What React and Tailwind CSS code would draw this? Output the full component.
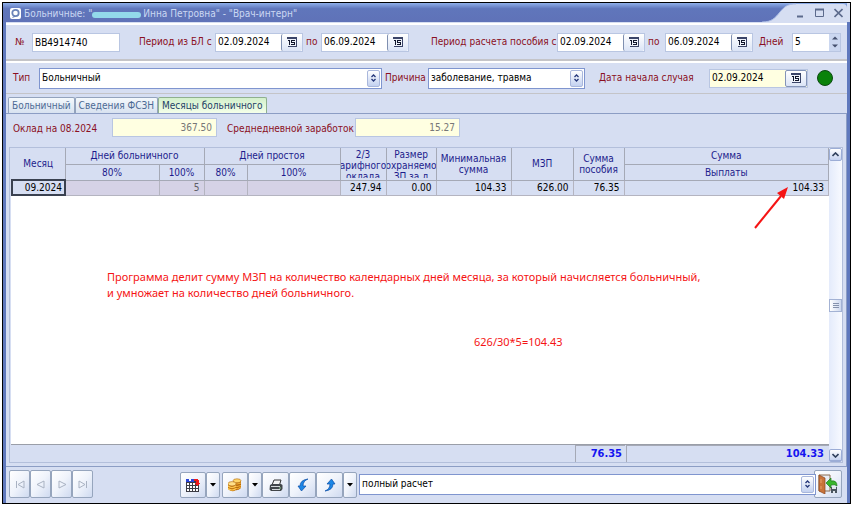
import { useState } from 'react'
import clsx from 'clsx'

const FIELD = 'min-w-0 h-[19px] border border-[#b9c6e2]'

const COLS = ['w-[53px]', 'w-[94px]', 'w-[45px]', 'w-[43px]', 'w-[93px]', 'w-[46px]', 'w-[50px]', 'w-[75px]', 'w-[62px]', 'w-[51px]', '']

const TABS = ['Больничный', 'Сведения ФСЗН', 'Месяцы больничного']

const NAV = [
  { label: 'Первая запись', d: 'M1.5 1v7M9 1v7L3 4.500z' },
  { label: 'Предыдущая запись', d: 'M8 1v7L1 4.500z' },
  { label: 'Следующая запись', d: 'M2 1v7L9 4.500z' },
  { label: 'Последняя запись', d: 'M8.500 1v7M1 1v7L7 4.500z' },
]

function CalendarIcon() {
  return (
    <svg width="10" height="10" viewBox="0 0 10 10" shapeRendering="crispEdges" aria-hidden="true">
      <rect x="1" y="0" width="9" height="10" fill="#3a4468" />
      <rect x="0" y="2" width="9" height="7" fill="#eef2fa" />
      <rect x="0" y="0" width="9" height="2" fill="#3a4468" />
      <path d="M2 3h1v5h-1zM1 3h1v1h-1zM4 3h4v1h-4zM4 4h1v1h-1zM4 5h4v1h-4zM7 6h1v1h-1zM4 7h4v1h-4z" fill="#10162c" />
    </svg>
  )
}

function DateField({ id, value, yellow }) {
  return (
    <div className={clsx('flex h-[19px] items-stretch border border-[#b9c6e2]', yellow ? 'w-[99px] bg-[#ffffe1]' : 'w-[88px] bg-white')}>
      <input id={id} defaultValue={value} className="min-w-0 flex-1 bg-transparent pl-0.5 text-black outline-none" />
      <button
        type="button"
        aria-label="Открыть календарь"
        className={clsx(
          'flex items-center justify-center rounded-xs bg-linear-to-b from-white to-[#dbe4f6]',
          yellow ? 'w-[22px] border border-[#8494b8]' : 'w-[21px] border-l border-[#7f8fb0]'
        )}
      >
        <CalendarIcon />
      </button>
    </div>
  )
}

function Combo({ id, label, value, className }) {
  return (
    <div className={clsx('relative h-[21px] min-w-0', className)}>
      <select
        id={id}
        aria-label={label}
        defaultValue={value}
        className="block h-full w-full appearance-none rounded-none border border-[#7f95cf] bg-white pl-0.5 text-black outline-none"
      >
        <option>{value}</option>
      </select>
      <span className="pointer-events-none absolute inset-y-0.5 right-0.5 flex w-[13px] items-center justify-center rounded-xs border border-[#a9b7dc] bg-linear-to-b from-white to-[#c3d1f0]">
        <svg width="5" height="8" viewBox="0 0 5 8" aria-hidden="true">
          <path d="M.5 3L2.500 1l2 2M.5 5l2 2 2-2" fill="none" stroke="#25377a" strokeWidth="1.3" />
        </svg>
      </span>
    </div>
  )
}

function ToolButton({ label, className, children }) {
  return (
    <button
      type="button"
      aria-label={label}
      className={clsx('flex items-center justify-center rounded-xs border border-[#96a5bd] bg-linear-to-br from-white via-[#eff3fb] to-[#cfdaf0]', className)}
    >
      {children}
    </button>
  )
}

function DropButton({ label }) {
  return (
    <ToolButton label={label} className="h-[26px] w-[14px]">
      <svg width="6" height="4" viewBox="0 0 6 4" aria-hidden="true"><path d="M0 0h6L3 3.500z" fill="#000" /></svg>
    </ToolButton>
  )
}

function TitleBar() {
  return (
    <header className="flex h-[19px] bg-linear-to-b from-[#8fb0ea] via-[#6076bb] via-30% to-[#5f72b8] text-[#cbd8f3]">
      <div className="flex min-w-0 flex-1 items-center gap-[3px] pt-[2px] pl-[7px]">
        <svg width="11" height="11" viewBox="0 0 11 11" className="shrink-0" aria-hidden="true">
          <rect width="11" height="11" rx="2" fill="#fff" />
          <circle cx="5.500" cy="5" r="3.200" fill="none" stroke="#6a83b8" strokeWidth="1.8" />
          <path d="M3 8.500L2 10l3-1z" fill="#6a83b8" />
        </svg>
        <h1 className="flex items-center whitespace-nowrap">
          <span>Больничные: &quot;</span>
          <span className="mt-0.5 mr-[2px] h-[6px] w-[49px] rounded-full bg-[#93d9ea]" />
          <span>Инна Петровна&quot; - &quot;Врач-интерн&quot;</span>
        </h1>
      </div>
      <div className="flex">
        <svg width="34" height="19" viewBox="0 0 34 19" aria-hidden="true">
          <path d="M0 19C10 19 13 15 18 9C23 3 26 1 34 1V19z" fill="#d6def2" />
          <path d="M0 19C10 19 13 15 18 9C23 3 26 1 34 1" fill="none" stroke="#aebfe6" />
        </svg>
        <div className="mt-px flex items-center gap-[10px] rounded-tr bg-[#d6def2] pr-[4px] text-[#5c6a8c]">
          <button type="button" aria-label="Свернуть" className="block">
            <svg width="9" height="10" viewBox="0 0 9 10"><path d="M1 8.500h6" stroke="currentColor" strokeWidth="2" /></svg>
          </button>
          <button type="button" aria-label="Развернуть" className="block">
            <svg width="9" height="10" viewBox="0 0 9 10"><path d="M0 1.500h9" stroke="currentColor" strokeWidth="2" /><path d="M.5 1v7.500h8V1" fill="none" stroke="currentColor" /></svg>
          </button>
          <button type="button" aria-label="Закрыть" className="block">
            <svg width="9" height="10" viewBox="0 0 9 10"><path d="M.5 1l8 8M8.500 1l-8 8" stroke="currentColor" strokeWidth="1.6" /></svg>
          </button>
        </div>
        <div className="w-[3px] bg-[#d6def2]" />
      </div>
    </header>
  )
}

function Filters() {
  return (
    <div className="text-[#8b0f22]">
      <div className="flex h-[38px] items-center border-t-2 border-b-2 border-t-white border-b-[#c4c4c8] pl-[9px] whitespace-nowrap">
        <label htmlFor="num" className="w-[17px]">№</label>
        <input id="num" defaultValue="BB4914740" className={clsx(FIELD, 'w-[88px] bg-white pl-0.5 text-black')} />
        <label htmlFor="blFrom" className="ml-[19px] w-[76px]">Период из БЛ с</label>
        <DateField id="blFrom" value="02.09.2024" />
        <label htmlFor="blTo" className="w-[18px] pl-[3px]">по</label>
        <DateField id="blTo" value="06.09.2024" />
        <label htmlFor="calcFrom" className="ml-[22px] w-[126px]">Период расчета пособия с</label>
        <DateField id="calcFrom" value="02.09.2024" />
        <label htmlFor="calcTo" className="w-[20px] pl-[3px]">по</label>
        <DateField id="calcTo" value="06.09.2024" />
        <label htmlFor="days" className="ml-[6px] w-[33px]">Дней</label>
        <div className={clsx(FIELD, 'flex w-[49px] bg-white text-black')}>
          <input id="days" defaultValue="5" className="min-w-0 flex-1 pl-0.5 outline-none" />
          <div className="flex w-[11px] flex-col bg-[#cbd7f0]">
            <button type="button" aria-label="Больше" className="flex flex-1 items-center justify-center">
              <svg width="6" height="4" viewBox="0 0 6 4"><path d="M0 3.500h6L3 .5z" fill="#45506e" /></svg>
            </button>
            <button type="button" aria-label="Меньше" className="flex flex-1 items-center justify-center">
              <svg width="6" height="4" viewBox="0 0 6 4"><path d="M0 .5h6L3 3.500z" fill="#45506e" /></svg>
            </button>
          </div>
        </div>
      </div>
      <div className="flex h-[33px] items-center border-t-2 border-b border-t-white border-b-[#c4c4c8] pl-[7px] whitespace-nowrap">
        <label htmlFor="type" className="w-[26px]">Тип</label>
        <Combo id="type" value="Больничный" className="flex-1" />
        <label htmlFor="reason" className="w-[46px] pl-[3px]">Причина</label>
        <Combo id="reason" value="заболевание, травма" className="w-[157px]" />
        <label htmlFor="caseDate" className="ml-[14px] w-[110px]">Дата начала случая</label>
        <DateField id="caseDate" value="02.09.2024" yellow />
        <span className="mr-[14px] ml-[9px] size-[16px] rounded-full border border-[#0c4a12] bg-[#0a820a]" />
      </div>
    </div>
  )
}

function HeadCell({ children, ...rest }) {
  return (
    <th {...rest} className="border-r border-b border-[#a5a9b6] p-0 font-normal text-[#1c1c8c]">
      {children}
    </th>
  )
}

function MonthsTable() {
  return (
    <table className="w-full table-fixed border-collapse bg-[#d6def2] leading-[11px]">
      <colgroup>
        {COLS.map((c, i) => <col key={i} className={c} />)}
      </colgroup>
      <thead>
        <tr className="h-[16px]">
          <HeadCell rowSpan={2}>Месяц</HeadCell>
          <HeadCell colSpan={2}>Дней больничного</HeadCell>
          <HeadCell colSpan={2}>Дней простоя</HeadCell>
          <HeadCell rowSpan={2}>
            <div className="flex h-[29px] flex-col items-center overflow-hidden">
              <span>2/3</span><span>арифного</span><span>оклада</span>
            </div>
          </HeadCell>
          <HeadCell rowSpan={2}>
            <div className="flex h-[29px] flex-col items-center overflow-hidden">
              <span>Размер</span><span>охраняемо</span><span>ЗП за д</span>
            </div>
          </HeadCell>
          <HeadCell rowSpan={2}>Минимальная сумма</HeadCell>
          <HeadCell rowSpan={2}>МЗП</HeadCell>
          <HeadCell rowSpan={2}>Сумма пособия</HeadCell>
          <HeadCell>Сумма</HeadCell>
        </tr>
        <tr className="h-[16px]">
          <HeadCell>80%</HeadCell>
          <HeadCell>100%</HeadCell>
          <HeadCell>80%</HeadCell>
          <HeadCell>100%</HeadCell>
          <HeadCell>Выплаты</HeadCell>
        </tr>
      </thead>
      <tbody>
        <tr className="h-[15px] text-right text-black">
          <td className="border-2 border-[#3a4150] p-0 pr-0.5">09.2024</td>
          {['', '5', '', ''].map((v, i) => (
            <td key={i} className="border-r border-b border-[#b4b4c0] bg-[#d5d2e6] p-0 pr-1 text-[#5f5f68]">{v}</td>
          ))}
          {['247.94', '0.00', '104.33', '626.00', '76.35', '104.33'].map((v, i) => (
            <td key={i} className="border-r border-b border-[#b4b4c0] p-0 pr-1">{v}</td>
          ))}
        </tr>
      </tbody>
    </table>
  )
}

function ScrollBar() {
  return (
    <div className="flex w-[13px] flex-col items-center justify-between bg-linear-to-r from-[#e4ebfb] to-[#f8faff]">
      <button type="button" aria-label="Вверх" className="flex h-[13px] w-full items-center justify-center rounded-xs border border-[#9cadd6] bg-linear-to-b from-white to-[#c6d3f0]">
        <svg width="7" height="5" viewBox="0 0 7 5"><path d="M.5 4l3-3 3 3" fill="none" stroke="#30405c" strokeWidth="1.6" /></svg>
      </button>
      <span className="flex h-[13px] w-full items-center justify-center border border-[#a3b2d4] bg-linear-to-r from-white to-[#cdd8ef]">
        <svg width="6" height="5" viewBox="0 0 6 5"><path d="M0 .5h6M0 2.500h6M0 4.500h6" stroke="#8592ad" /></svg>
      </span>
      <button type="button" aria-label="Вниз" className="flex h-[13px] w-full items-center justify-center rounded-xs border border-b-2 border-[#9cadd6] bg-linear-to-b from-white to-[#c6d3f0]">
        <svg width="7" height="5" viewBox="0 0 7 5"><path d="M.5 1l3 3 3-3" fill="none" stroke="#30405c" strokeWidth="1.6" /></svg>
      </button>
    </div>
  )
}

function Toolbar() {
  return (
    <footer className="flex items-center pt-[3px] pr-[5px] pb-[5px] pl-[3px]">
      {NAV.map(({ label, d }) => (
        <ToolButton key={label} label={label} className="h-[28px] w-[21px]">
          <svg width="10" height="9" viewBox="0 0 10 9"><path d={d} fill="none" stroke="#a9b2c2" /></svg>
        </ToolButton>
      ))}
      <div className="mt-0.5 ml-[87px] flex items-center">
        <ToolButton label="Календарь" className="h-[26px] w-[26px]">
          <svg width="14" height="13" viewBox="0 0 14 13" shapeRendering="crispEdges" aria-hidden="true">
            <path d="M0 2h13v11H0z" fill="#3c3c44" />
            <path d="M1 4h2v2H1zM4 4h2v2H4zM7 4h2v2H7zM10 4h2v2h-2zM1 7h2v2H1zM4 7h2v2H4zM7 7h2v2H7zM10 7h2v2h-2zM1 10h2v2H1zM4 10h2v2H4zM7 10h2v2H7zM10 10h2v2h-2z" fill="#fff" />
            <path d="M0 0h8v3H0z" fill="#2b45d8" />
            <path d="M3 0h2v2H3z" fill="#fff" />
            <path d="M8 0h4v1h1v3h1v1h-1v1h-1v1h-1V6h-1V5H9V4h1V2H8z" fill="#f01818" />
          </svg>
        </ToolButton>
        <DropButton label="Меню календаря" />
        <ToolButton label="Выплаты" className="ml-[2px] h-[26px] w-[26px]">
          <svg width="14" height="14" viewBox="0 0 14 14" aria-hidden="true">
            <path d="M5 3v8q4 3 8-1V3z" fill="#b86a10" />
            <path d="M5 5q4 2 8 0M5 7.500q4 2 8 0M6 10q4 2 7-1" fill="none" stroke="#f4b437" />
            <ellipse cx="9" cy="2.800" rx="4" ry="2" fill="#ffd568" stroke="#b06a12" strokeWidth=".6" />
            <path d="M0 6v5q4 4 8 1V6z" fill="#c67a14" />
            <path d="M0 8q4 3 8 0M0 10.500q4 3 8 0" fill="none" stroke="#ffcc55" strokeWidth="1.200" />
            <ellipse cx="4" cy="5.800" rx="4" ry="2.200" fill="#ffe08a" stroke="#b06a12" strokeWidth=".6" />
          </svg>
        </ToolButton>
        <DropButton label="Меню выплат" />
        <ToolButton label="Печать" className="h-[26px] w-[27px]">
          <svg width="14" height="13" viewBox="0 0 14 13" aria-hidden="true">
            <path d="M5 1h7l-1.500 5H3z" fill="#f4f4f4" stroke="#333" />
            <path d="M1 6l2-1h9l1.500 1v4L12 12H2L.5 10.500z" fill="#42464a" />
            <path d="M2 7.500h9M3 10.500h8" stroke="#d5d8da" />
            <path d="M10 9h2" stroke="#88cc88" />
          </svg>
        </ToolButton>
        <ToolButton label="Загрузить" className="h-[26px] w-[27px]">
          <svg width="12" height="14" viewBox="0 0 12 14" aria-hidden="true">
            <path d="M11 1Q6 3 6 8h3l-4.500 5L1 8h2Q3 2 11 1z" fill="#1c87e6" stroke="#0c4da6" strokeWidth=".7" />
          </svg>
        </ToolButton>
        <ToolButton label="Выгрузить" className="h-[26px] w-[27px]">
          <svg width="12" height="14" viewBox="0 0 12 14" aria-hidden="true">
            <path d="M1 13Q6 11 6 6H3l4.500-5L11 6H9Q9 12 1 13z" fill="#1c87e6" stroke="#0c4da6" strokeWidth=".7" />
          </svg>
        </ToolButton>
        <DropButton label="Ещё" />
      </div>
      <Combo label="Режим расчета" value="полный расчет" className="ml-[2px] flex-1" />
      <ToolButton label="Выход" className="-ml-0.5 h-[28px] w-[28px]">
        <svg width="20" height="20" viewBox="0 0 20 20" aria-hidden="true">
          <path d="M1 1h11v16H1z" fill="#e8edf4" stroke="#8a6a4c" />
          <path d="M1 1l6 3v16l-6-3z" fill="#c9743a" stroke="#8a451c" strokeWidth=".7" />
          <path d="M3 5v4M3 12v3" stroke="#e9a26c" />
          <path d="M8 9l5-5v3q6-1 6 5-2-2-6-1v3z" fill="#38b52c" stroke="#1c7a18" strokeWidth=".7" />
          <path d="M13 13h6v6h-6z" fill="#4a5560" />
          <path d="M14 13h4v2h-4zM15 17h2v2h-2z" fill="#dfe5ea" />
        </svg>
      </ToolButton>
    </footer>
  )
}

export default function App() {
  const [tab, setTab] = useState(2)

  return (
    <div className="flex min-h-screen bg-white p-[2px] font-['DejaVu_Sans_Condensed','DejaVu_Sans',sans-serif] text-[10px] leading-[14px]">
      <div className="flex min-w-0 flex-1 flex-col border border-black bg-[#5f78bd]">
        <TitleBar />
        <main className="mr-[3px] ml-[3px] flex flex-1 flex-col bg-[#d6def2] pt-px">
          <Filters />

          <div role="tablist" className="mt-0.5 flex h-[17px] items-end pl-0.5">
            {TABS.map((t, i) => (
              <button
                key={t}
                type="button"
                role="tab"
                aria-selected={tab === i}
                onClick={() => setTab(i)}
                className={clsx(
                  'h-[16px] rounded-t-xs border border-b-0 px-[3px] whitespace-nowrap',
                  tab === i ? 'border-[#8fb08f] bg-linear-to-b from-[#d3f0cc] to-[#f4ffe9] text-[#1e3f66]' : 'border-[#93a3bd] bg-linear-to-b from-[#f4f8fc] to-[#d8e2f0] text-[#4c6a94]'
                )}
              >
                {t}
              </button>
            ))}
          </div>

          <section className="flex flex-1 flex-col border-t border-r border-b border-[#8c9dc4] pr-[3px] pb-[3px] pl-[3px]">
            <div className="flex h-[33px] items-center pb-[7px] pl-[4px] whitespace-nowrap text-[#8b0f22]">
              <label htmlFor="salary" className="w-[99px] pt-1">Оклад на 08.2024</label>
              <input id="salary" defaultValue="367.50" className={clsx(FIELD, 'w-[105px] bg-[#ffffe1] pr-1 text-right text-[#777]')} />
              <label htmlFor="average" className="w-[138px] pt-1 pl-[10px]">Среднедневной заработок</label>
              <input id="average" defaultValue="15.27" className={clsx(FIELD, 'w-[105px] bg-[#ffffe1] pr-1 text-right text-[#777]')} />
            </div>

            <div className="flex flex-1 border border-[#b3bfdb] pl-px">
              <div className="relative flex min-w-0 flex-1 flex-col bg-white">
                <MonthsTable />
                <svg width="36" height="44" viewBox="0 0 36 44" className="absolute top-[38px] right-[40px]" aria-hidden="true">
                  <path d="M2 42L28 10" stroke="#f51414" strokeWidth="2" />
                  <path d="M35 1l-4 12-7-6z" fill="#f51414" />
                </svg>
                <div className="flex-1 pt-[73px] pl-[96px] font-['Noto_Sans',sans-serif] text-[11px] leading-[16px] text-[#f51414]">
                  <p>
                    Программа делит сумму МЗП на количество календарных дней месяца, за который начисляется больничный,
                    <br />
                    и умножает на количество дней больничного.
                  </p>
                  <p className="mt-[33px] pl-[367px]">626/30*5=104.43</p>
                </div>
                <div className="flex h-[18px] justify-end border-t border-[#9a9ea8] bg-[#d6def2] pl-[564px] text-right text-[11px] leading-[16px] font-bold text-[#1414f0]">
                  <output className="w-[50px] border-t border-l border-[#a5a9b6] pr-[3px]">76.35</output>
                  <output className="ml-px min-w-0 flex-1 border-t border-l border-[#a5a9b6] pr-[5px]">104.33</output>
                </div>
              </div>
              <ScrollBar />
            </div>
          </section>

          <Toolbar />
        </main>
      </div>
    </div>
  )
}
